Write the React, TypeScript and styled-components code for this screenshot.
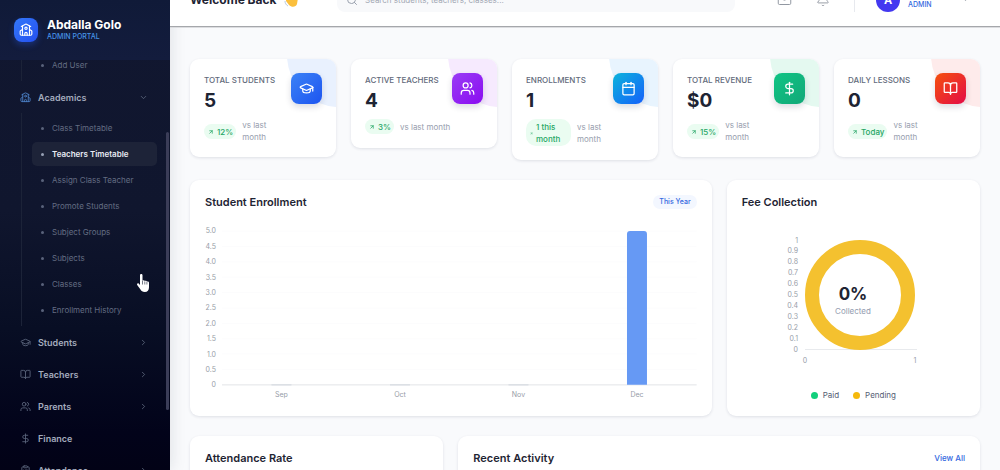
import React from 'react';
import styled, { createGlobalStyle } from 'styled-components';
import {
  ArrowUpRight, Bell, BookOpen, Calendar, ChevronDown, ChevronRight, DollarSign,
  GraduationCap, Mail, School, Search, Users, ClipboardList,
} from 'lucide-react';

const GlobalStyle = createGlobalStyle`
  *, *::before, *::after { box-sizing: border-box; }
  body {
    margin: 0;
    background: #f9fafc;
    color: #1e2433;
    font-family: Inter, "Liberation Sans", sans-serif;
    overflow: hidden;
  }
  h1, h2, h3, p, ul, dl, dd { margin: 0; padding: 0; }
  ul { list-style: none; }
  button, input { font: inherit; border: 0; background: none; padding: 0; margin: 0; }
  a { color: inherit; text-decoration: none; }
  svg { display: block; }
`;

const Shell = styled.div`
  display: flex;
  height: 100vh;
  overflow: hidden;
`;

/* ---------- Sidebar ---------- */

const Sidebar = styled.aside`
  position: relative;
  display: flex;
  flex-direction: column;
  flex: 0 0 170px;
  background: linear-gradient(180deg, #111730 0%, #10162e 45%, #080e24 70%, #02031a 92%, #020216 100%);
  box-shadow: 2px 0 14px rgba(20, 25, 50, 0.1);
`;

const Brand = styled.div`
  display: flex;
  align-items: center;
  gap: 9px;
  height: 60px;
  padding: 0 14px;
  background: linear-gradient(180deg, #101a38, #131c3d);
  flex-shrink: 0;
`;

const BrandMark = styled.span`
  display: grid;
  place-items: center;
  width: 24px;
  height: 24px;
  border-radius: 8px;
  background: linear-gradient(135deg, #3478fa, #2450f0);
  box-shadow: 0 3px 6px rgba(43, 100, 255, 0.3);
  color: #fff;
`;

const BrandName = styled.h1`
  font-size: 12px;
  line-height: 14px;
  font-weight: 700;
  color: #fff;
`;

const BrandRole = styled.p`
  font-size: 7px;
  line-height: 10px;
  font-weight: 500;
  color: #4694e8;
`;

const Nav = styled.nav`
  flex: 1;
  overflow: hidden;
`;

const NavList = styled.ul`
  margin-top: -10px;
`;

const NavButton = styled.button`
  display: flex;
  align-items: center;
  gap: 7px;
  width: 100%;
  height: 32px;
  padding: 0 22px 0 20px;
  font-size: 9px;
  font-weight: 600;
  color: #a3abbd;
  text-align: left;
`;

const NavIcon = styled.span<{ $active?: boolean }>`
  color: ${(p) => (p.$active ? '#4a7fc4' : '#59627a')};
`;

const NavText = styled.span`
  flex: 1;
`;

const Chevron = styled.span`
  color: #667085;
`;

const SubList = styled.ul`
  display: flex;
  flex-direction: column;
  gap: 2px;
  margin-left: 21px;
  padding: 3px 13px 4px 10px;
  border-left: 1px solid #1c2338;
`;

const SubLink = styled.a<{ $active?: boolean }>`
  display: flex;
  align-items: center;
  gap: 8px;
  height: 24px;
  padding-left: 9px;
  border-radius: 5px;
  font-size: 8px;
  font-weight: ${(p) => (p.$active ? 600 : 400)};
  color: ${(p) => (p.$active ? '#e8ebf4' : '#636c82')};
  background: ${(p) => (p.$active ? '#1d2338' : 'transparent')};

  &::before {
    content: '';
    width: 3px;
    height: 3px;
    border-radius: 50%;
    background: ${(p) => (p.$active ? '#98a1b5' : '#59627a')};
  }
`;

const ScrollThumb = styled.span`
  position: absolute;
  top: 132px;
  right: 1px;
  bottom: 60px;
  width: 3px;
  border-radius: 2px;
  background: #3b3d58;
`;

const Pointer = styled.svg`
  position: absolute;
  left: 136px;
  top: 273px;
`;

/* ---------- Header ---------- */

const Main = styled.main`
  flex: 1;
  min-width: 0;
`;

const Header = styled.header`
  position: relative;
  display: flex;
  align-items: center;
  height: 54px;
  margin-top: -27px;
  padding: 0 30px 0 20px;
  background: #fff;
  border-bottom: 1px solid #a5a7ab;
  box-shadow: 0 1px 0 #dcdde0;
`;

const Greeting = styled.h2`
  display: flex;
  align-items: center;
  gap: 6px;
  width: 147px;
  font-size: 12px;
  line-height: 16px;
  font-weight: 700;
  white-space: nowrap;
`;

const SearchBox = styled.label`
  display: flex;
  align-items: center;
  gap: 7px;
  flex: 0 1 398px;
  height: 24px;
  padding: 0 9px;
  border-radius: 8px;
  background: #f8f9fb;
  color: #9aa1ae;
`;

const SearchInput = styled.input`
  flex: 1;
  min-width: 0;
  font-size: 8px;
  outline: none;
  &::placeholder { color: #a2a8b4; opacity: 1; }
`;

const HeaderTools = styled.div`
  display: flex;
  align-items: center;
  gap: 24px;
  margin-left: auto;
  color: #8b919c;
`;

const IconButton = styled.button`
  color: inherit;
`;

const Profile = styled.button`
  display: flex;
  align-items: center;
  gap: 8px;
  height: 24px;
  padding-left: 21px;
  border-left: 1px solid #e7e9ee;
  text-align: left;
  color: #8b919c;
`;

const Avatar = styled.span`
  display: grid;
  place-items: center;
  width: 24px;
  height: 24px;
  border-radius: 50%;
  background: #4338f0;
  color: #fff;
  font-size: 11px;
  font-weight: 700;
`;

const ProfileText = styled.span`
  width: 45px;
  padding-top: 9px;
  font-size: 7px;
  line-height: 9px;
  font-weight: 500;
  color: #3468e0;
`;

/* ---------- Content ---------- */

const Content = styled.div`
  display: flex;
  flex-direction: column;
  gap: 20px;
  padding: 32px 20px 20px;
`;

const StatGrid = styled.section`
  display: grid;
  grid-template-columns: repeat(5, 1fr);
  gap: 15px;
  align-items: start;
`;

const Card = styled.section<{ $span?: number }>`
  grid-column: span ${(p) => p.$span ?? 1};
  min-width: 0;
  padding: 15px;
  border-radius: 9px;
  background: #fff;
  box-shadow: 0 1px 3px rgba(30, 40, 70, 0.12);
`;

const StatCard = styled.article<{ $tint: string }>`
  position: relative;
  display: flex;
  justify-content: space-between;
  padding: 14px;
  border-radius: 9px;
  background: #fff;
  box-shadow: 0 1px 3px rgba(30, 40, 70, 0.12);
  overflow: hidden;

  &::before {
    content: '';
    position: absolute;
    top: -56px;
    right: -55px;
    width: 104px;
    height: 104px;
    border-radius: 50%;
    background: ${(p) => p.$tint};
  }
`;

const StatBody = styled.div`
  flex: 1;
  min-width: 0;
  white-space: nowrap;
`;

const StatLabel = styled.h3`
  font-size: 8px;
  line-height: 14px;
  font-weight: 500;
  color: #626a7b;
`;

const StatValue = styled.p`
  margin-bottom: 4px;
  font-size: 19px;
  line-height: 28px;
  font-weight: 700;
`;

const StatBadge = styled.span<{ $from: string; $to: string }>`
  position: relative;
  display: grid;
  place-items: center;
  flex-shrink: 0;
  width: 31px;
  height: 31px;
  border-radius: 8px;
  color: #fff;
  background: linear-gradient(135deg, ${(p) => p.$from}, ${(p) => p.$to});
  box-shadow: 0 3px 6px rgba(30, 40, 70, 0.16);
`;

const Trend = styled.p`
  display: flex;
  align-items: center;
  gap: 6px;
  font-size: 8px;
  line-height: 12px;
  color: #979eae;
  white-space: pre;
`;

const TrendPill = styled.span<{ $wrapped: boolean }>`
  display: flex;
  align-items: center;
  gap: 3px;
  min-width: ${(p) => (p.$wrapped ? '45px' : '0')};
  padding: 2px 3px 1px 4px;
  border-radius: 10px;
  background: #eafcf1;
  color: #25a665;
  font-weight: 500;
`;

const PanelGrid = styled.div`
  display: grid;
  grid-template-columns: repeat(3, 1fr);
  gap: 20px 15px;
`;

const PanelHead = styled.div`
  display: flex;
  align-items: center;
  justify-content: space-between;
  height: 14px;
`;

const PanelTitle = styled.h2`
  font-size: 11px;
  line-height: 14px;
  font-weight: 600;
`;

const Tag = styled.span`
  padding: 0 6px;
  border-radius: 7px;
  background: #f3f7ff;
  color: #3468e0;
  font-size: 7px;
  line-height: 14px;
  font-weight: 500;
`;

const MoreLink = styled.a`
  color: #3468e0;
  font-size: 8px;
  line-height: 14px;
  font-weight: 500;
`;

const Chart = styled.svg`
  width: 100%;
  height: auto;
  margin-top: 12px;
  font-size: 7px;
  fill: #979da8;
`;

const DonutWrap = styled.div`
  display: flex;
  justify-content: center;
  padding: 20px 0;
`;

const DonutChart = styled.svg`
  font-size: 7px;
  fill: #979da8;
`;

const Legend = styled.ul`
  display: flex;
  justify-content: center;
  gap: 14px;
  font-size: 8px;
  line-height: 12px;
  color: #566074;
`;

const LegendItem = styled.li<{ $color: string }>`
  display: flex;
  align-items: center;
  gap: 5px;
  &::before {
    content: '';
    width: 7px;
    height: 7px;
    border-radius: 50%;
    background: ${(p) => p.$color};
  }
`;

const PanelBody = styled.div`
  height: 160px;
`;

/* ---------- Data ---------- */

const academics = [
  'Class Timetable', 'Teachers Timetable', 'Assign Class Teacher', 'Promote Students',
  'Subject Groups', 'Subjects', 'Classes', 'Enrollment History',
];

const sections = [
  { label: 'Students', Icon: GraduationCap, open: true },
  { label: 'Teachers', Icon: BookOpen, open: true },
  { label: 'Parents', Icon: Users, open: true },
  { label: 'Finance', Icon: DollarSign, open: false },
  { label: 'Attendance', Icon: ClipboardList, open: true },
];

const stats = [
  { label: 'TOTAL STUDENTS', value: '5', trend: '12%', note: 'vs last\nmonth', Icon: GraduationCap, from: '#3b82f6', to: '#1d55f0', tint: '#e9f1fe', arrow: 6 },
  { label: 'ACTIVE TEACHERS', value: '4', trend: '3%', note: 'vs last month', Icon: Users, from: '#9a3df5', to: '#8a0cf0', tint: '#f6eafe', arrow: 6 },
  { label: 'ENROLLMENTS', value: '1', trend: '1 this\nmonth', note: 'vs last\nmonth', Icon: Calendar, from: '#0cb4dc', to: '#1560fa', tint: '#e8f4fe', arrow: 3 },
  { label: 'TOTAL REVENUE', value: '$0', trend: '15%', note: 'vs last\nmonth', Icon: DollarSign, from: '#10c484', to: '#12a878', tint: '#e4f9f0', arrow: 6 },
  { label: 'DAILY LESSONS', value: '0', trend: 'Today', note: 'vs last\nmonth', Icon: BookOpen, from: '#f5500c', to: '#e30c48', tint: '#feebeb', arrow: 6 },
];

const months = [
  { name: 'Sep', value: 0 }, { name: 'Oct', value: 0 },
  { name: 'Nov', value: 0 }, { name: 'Dec', value: 5 },
];

const enrollTicks = ['5.0', '4.5', '4.0', '3.5', '3.0', '2.5', '2.0', '1.5', '1.0', '0.5', '0'];
const feeTicks = ['1', '0.9', '0.8', '0.7', '0.6', '0.5', '0.4', '0.3', '0.2', '0.1', '0'];

/* ---------- Parts ---------- */

const WavingHand = () => (
  <svg width="16" height="16" viewBox="0 0 16 16" aria-hidden="true">
    <path d="M3 6 5 3l1 1 1-2 2 1 1-1 2 3 1-1 2 2-1 6c-1 3-5 4-8 1L3 9z" fill="#fbbf3c" />
    <path d="M2 9c0 2 1 4 3 5" fill="none" stroke="#b9cbe0" strokeWidth="1" />
  </svg>
);

const HandPointer = () => (
  <Pointer width="14" height="20" viewBox="0 0 14 20" aria-hidden="true">
    <path
      d="M4 2.2C4 .6 6.5.6 6.5 2.2V8c.4-1 2.2-.8 2.3.3.5-.8 2-.5 2.1.5.7-.6 2.1-.2 2.1 1v4.4c0 2.8-1.5 4.8-4.200 4.800-2.300 0-3.500-.9-4.500-2.700L1.200 12c-.7-1.300.8-2.200 1.700-1.200L4 12z"
      fill="#fff"
    />
    <path d="M6.500 8v3.500M8.800 8.500v3M10.900 9v2.500" stroke="#1a2036" strokeWidth=".6" fill="none" />
  </Pointer>
);

const EnrollmentChart = () => (
  <Chart viewBox="0 0 492 180" role="img" aria-label="Student enrollment by month">
    {enrollTicks.map((t, i) => (
      <g key={t}>
        <line x1="17" x2="492" y1={10 + i * 15.4} y2={10 + i * 15.4} stroke={t === '0' ? '#e2e4e8' : '#fcfcfd'} />
        <text x="11" y={12.5 + i * 15.4} textAnchor="end">{t}</text>
      </g>
    ))}
    {months.map((m, i) => {
      const cx = 76.5 + i * 118.6;
      const h = m.value * 30.8;
      return (
        <g key={m.name}>
          {h > 0
            ? <path d={`M${cx - 10} 164v${3 - h}q0-3 3-3h14q3 0 3 3v${h - 3}z`} fill="#6699f4" />
            : <line x1={cx - 10} x2={cx + 10} y1="164" y2="164" stroke="#d2d7de" />}
          <text x={cx} y="176.5" textAnchor="middle">{m.name}</text>
        </g>
      );
    })}
  </Chart>
);

const FeeChart = () => (
  <DonutChart width="146" height="140" viewBox="0 0 146 140" role="img" aria-label="Fee collection">
    <line x1="25" x2="137" y1="120.5" y2="120.5" stroke="#e8eaed" />
    {feeTicks.map((t, i) => (
      <text key={t} x="18" y={13.5 + i * 10.95} textAnchor="end">{t}</text>
    ))}
    <text x="25" y="134" textAnchor="middle">0</text>
    <text x="135" y="134" textAnchor="middle">1</text>
    <circle cx="80" cy="66" r="48" fill="none" stroke="#f4c12f" strokeWidth="14" />
    <text x="73" y="71" textAnchor="middle" fontSize="17" fontWeight="700" fill="#1e2433">0%</text>
    <text x="73" y="85" textAnchor="middle" fontSize="8" fill="#939cb0">Collected</text>
  </DonutChart>
);

export default function App() {
  return (
    <>
      <GlobalStyle />
      <Shell>
        <Sidebar>
          <Brand>
            <BrandMark><School size={14} strokeWidth={2} /></BrandMark>
            <div>
              <BrandName>Abdalla Golo</BrandName>
              <BrandRole>ADMIN PORTAL</BrandRole>
            </div>
          </Brand>
          <Nav>
            <NavList>
              <li>
                <SubList>
                  <li><SubLink href="#add-user">Add User</SubLink></li>
                </SubList>
              </li>
              <li>
                <NavButton>
                  <NavIcon $active><School size={11} /></NavIcon>
                  <NavText>Academics</NavText>
                  <Chevron><ChevronDown size={9} /></Chevron>
                </NavButton>
                <SubList>
                  {academics.map((name) => (
                    <li key={name}>
                      <SubLink href="#academics" $active={name === 'Teachers Timetable'}>{name}</SubLink>
                    </li>
                  ))}
                </SubList>
              </li>
              {sections.map(({ label, Icon, open }) => (
                <li key={label}>
                  <NavButton>
                    <NavIcon><Icon size={11} /></NavIcon>
                    <NavText>{label}</NavText>
                    {open && <Chevron><ChevronRight size={9} /></Chevron>}
                  </NavButton>
                </li>
              ))}
            </NavList>
          </Nav>
          <ScrollThumb />
          <HandPointer />
        </Sidebar>

        <Main>
          <Header>
            <Greeting>Welcome Back <WavingHand /></Greeting>
            <SearchBox>
              <Search size={12} />
              <SearchInput type="search" placeholder="Search students, teachers, classes..." aria-label="Search" />
            </SearchBox>
            <HeaderTools>
              <IconButton aria-label="Messages"><Mail size={15} strokeWidth={1.5} /></IconButton>
              <IconButton aria-label="Notifications"><Bell size={14} strokeWidth={1.5} /></IconButton>
              <Profile>
                <Avatar>A</Avatar>
                <ProfileText>ADMIN</ProfileText>
                <ChevronDown size={9} />
              </Profile>
            </HeaderTools>
          </Header>

          <Content>
            <StatGrid>
              {stats.map(({ label, value, trend, note, Icon, from, to, tint, arrow }) => (
                <StatCard key={label} $tint={tint}>
                  <StatBody>
                    <StatLabel>{label}</StatLabel>
                    <StatValue>{value}</StatValue>
                    <Trend>
                      <TrendPill $wrapped={trend.includes('\n')}>
                        <ArrowUpRight size={arrow} strokeWidth={3} />{trend}
                      </TrendPill>
                      <span>{note}</span>
                    </Trend>
                  </StatBody>
                  <StatBadge $from={from} $to={to}><Icon size={15} /></StatBadge>
                </StatCard>
              ))}
            </StatGrid>

            <PanelGrid>
              <Card $span={2}>
                <PanelHead>
                  <PanelTitle>Student Enrollment</PanelTitle>
                  <Tag>This Year</Tag>
                </PanelHead>
                <EnrollmentChart />
              </Card>
              <Card>
                <PanelHead><PanelTitle>Fee Collection</PanelTitle></PanelHead>
                <DonutWrap><FeeChart /></DonutWrap>
                <Legend>
                  <LegendItem $color="#12cf7c">Paid</LegendItem>
                  <LegendItem $color="#f5b90c">Pending</LegendItem>
                </Legend>
              </Card>
              <Card>
                <PanelHead><PanelTitle>Attendance Rate</PanelTitle></PanelHead>
                <PanelBody />
              </Card>
              <Card $span={2}>
                <PanelHead>
                  <PanelTitle>Recent Activity</PanelTitle>
                  <MoreLink href="#activity">View All</MoreLink>
                </PanelHead>
                <PanelBody />
              </Card>
            </PanelGrid>
          </Content>
        </Main>
      </Shell>
    </>
  );
}
